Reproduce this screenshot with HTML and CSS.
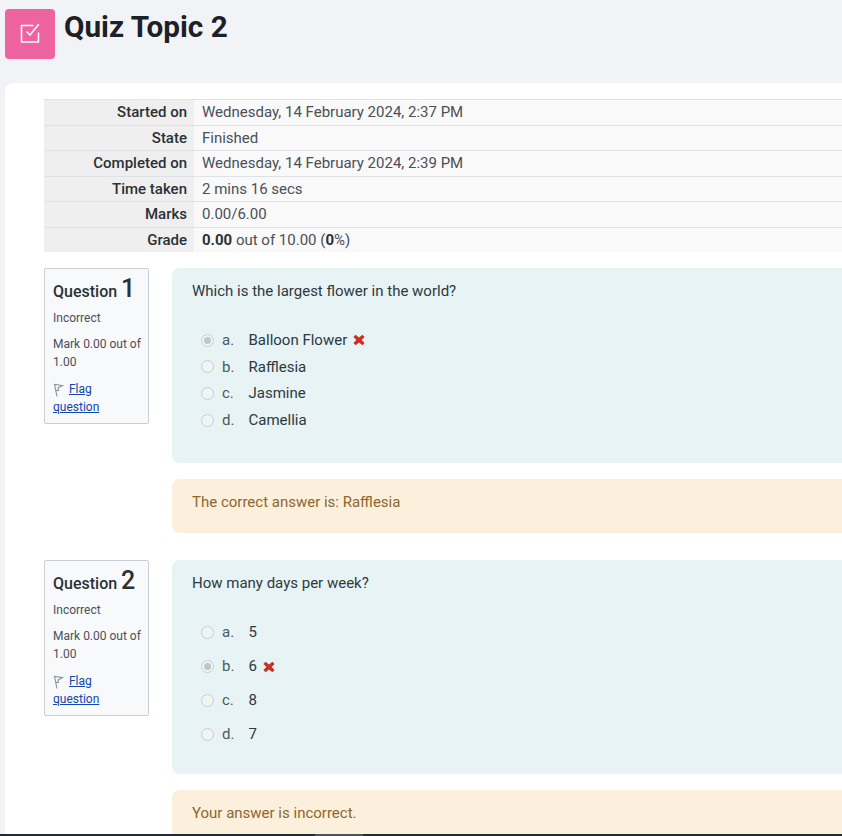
FILE: index.html
```html
<!DOCTYPE html>
<html lang="en">
<head>
<meta charset="utf-8">
<title>Quiz Topic 2</title>
<link rel="stylesheet" href="styles.css">
</head>
<body>
<div class="page">
  <header class="page-header">
    <div class="activity-icon">
      <svg width="24" height="24" viewBox="0 0 24 24" fill="none" stroke="#fff" stroke-width="1.5" stroke-linecap="round" stroke-linejoin="round">
        <path d="M20.5 11V20H3.5V3.5H15"/>
        <path d="M9 10L12 13L20.5 2.5"/>
      </svg>
    </div>
    <h1 class="title">Quiz Topic 2</h1>
  </header>
  <main class="card">
    <table class="summary">
      <tr><th>Started on</th><td>Wednesday, 14 February 2024, 2:37 PM</td></tr>
      <tr><th>State</th><td>Finished</td></tr>
      <tr><th>Completed on</th><td>Wednesday, 14 February 2024, 2:39 PM</td></tr>
      <tr><th>Time taken</th><td>2 mins 16 secs</td></tr>
      <tr><th>Marks</th><td>0.00/6.00</td></tr>
      <tr class="last"><th>Grade</th><td><b>0.00</b> out of 10.00 (<b>0</b>%)</td></tr>
    </table>

    <section class="question q1">
      <aside class="info">
        <h3 class="qno">Question <span class="num">1</span></h3>
        <div class="state">Incorrect</div>
        <div class="grade">Mark 0.00 out of 1.00</div>
        <div class="flag">
          <svg class="flag-icon" width="12" height="14" viewBox="0 0 12 14" fill="none" stroke="#8a8f94" stroke-width="1.1"><path d="M4 13.5L1.5 1.5L9.5 2.5L5 5L5.5 7.5L2.8 7.5"/></svg>
          <a href="#">Flag question</a>
        </div>
      </aside>
      <div class="content">
        <div class="formulation">
          <p class="qtext">Which is the largest flower in the world?</p>
          <div class="answers">
            <div class="answer"><span class="radio checked"></span><span class="letter">a.</span><span>Balloon Flower</span><svg class="cross" width="12" height="12" viewBox="0 0 12 12"><path d="M2.6 0.8L6 3.6L9.4 0.8L11.6 3L8.6 6L11.6 9L9.4 11.2L6 8.4L2.6 11.2L0.4 9L3.4 6L0.4 3Z" fill="#ca3120"/></svg></div>
            <div class="answer"><span class="radio"></span><span class="letter">b.</span><span>Rafflesia</span></div>
            <div class="answer"><span class="radio"></span><span class="letter">c.</span><span>Jasmine</span></div>
            <div class="answer"><span class="radio"></span><span class="letter">d.</span><span>Camellia</span></div>
          </div>
        </div>
        <div class="feedback">The correct answer is: Rafflesia</div>
      </div>
    </section>

    <section class="question q2">
      <aside class="info">
        <h3 class="qno">Question <span class="num">2</span></h3>
        <div class="state">Incorrect</div>
        <div class="grade">Mark 0.00 out of 1.00</div>
        <div class="flag">
          <svg class="flag-icon" width="12" height="14" viewBox="0 0 12 14" fill="none" stroke="#8a8f94" stroke-width="1.1"><path d="M4 13.5L1.5 1.5L9.5 2.5L5 5L5.5 7.5L2.8 7.5"/></svg>
          <a href="#">Flag question</a>
        </div>
      </aside>
      <div class="content">
        <div class="formulation">
          <p class="qtext">How many days per week?</p>
          <div class="answers">
            <div class="answer"><span class="radio"></span><span class="letter">a.</span><span>5</span></div>
            <div class="answer"><span class="radio checked"></span><span class="letter">b.</span><span>6</span><svg class="cross" width="12" height="12" viewBox="0 0 12 12"><path d="M2.6 0.8L6 3.6L9.4 0.8L11.6 3L8.6 6L11.6 9L9.4 11.2L6 8.4L2.6 11.2L0.4 9L3.4 6L0.4 3Z" fill="#ca3120"/></svg></div>
            <div class="answer"><span class="radio"></span><span class="letter">c.</span><span>8</span></div>
            <div class="answer"><span class="radio"></span><span class="letter">d.</span><span>7</span></div>
          </div>
        </div>
        <div class="feedback">Your answer is incorrect.</div>
      </div>
    </section>
  </main>
</div>
<div class="bottom-bar"><span class="bottom-thumb"></span></div>
</body>
</html>
```
FILE: styles.css
```css
html, body {
  margin: 0;
  height: 836px;
  overflow: hidden;
}
body {
  background: #f1f3f7;
  color: #1d2125;
  font-family: Roboto, "Liberation Sans", sans-serif;
  font-size: 15px;
  line-height: 1.5;
  position: relative;
}
.page {
  width: 900px;
  padding-left: 5px;
}
.page-header {
  display: flex;
  align-items: flex-start;
  gap: 9px;
  padding-top: 9px;
  height: 83px;
  box-sizing: border-box;
}
.activity-icon {
  width: 50px;
  height: 50px;
  background: #ee64a0;
  border-radius: 4px;
  display: flex;
  align-items: center;
  justify-content: center;
}
.title {
  margin: 0;
  font-size: 29.7px;
  font-weight: 700;
  line-height: 36px;
}
.card {
  background: #fff;
  border-radius: 8px 0 0 0;
  padding: 16px 0 0 39px;
  height: 800px;
}
.summary {
  width: 100%;
  border-collapse: collapse;
  color: #495057;
  font-size: 15px;
  margin-bottom: 16px;
}
.summary th, .summary td {
  height: 25.5px;
  padding: 0 7px;
  border-top: 1px solid #dee2e6;
  box-sizing: border-box;
  line-height: 24px;
}
.summary .last th, .summary .last td {
  height: 25px;
}
.summary th {
  width: 150px;
  box-sizing: border-box;
  text-align: right;
  background: #efefef;
  color: #2b3136;
  font-weight: 500;
}
.summary td {
  background: #f9f9f9;
  padding-left: 8px;
  text-align: left;
}
.summary b { font-weight: 700; color: #2b3136; }
.question {
  display: flex;
  gap: 23px;
  align-items: flex-start;
}
.q1 { margin-bottom: 27px; }
.info {
  width: 105px;
  height: 156px;
  flex: none;
  box-sizing: border-box;
  padding: 6px 6px 6px 8px;
  background: #f8f9fa;
  border: 1px solid #c8ced5;
  border-radius: 2px;
  font-size: 12px;
  line-height: 18px;
  color: #495057;
}
.qno {
  margin: 0 0 3px;
  font-size: 16px;
  font-weight: 500;
  line-height: 28px;
  color: #2b3136;
}
.num {
  font-size: 25px;
  font-weight: 500;
}
.state { margin-bottom: 8px; }
.grade { margin-bottom: 9px; }
.flag { padding-right: 12px; }
.flag-icon {
  vertical-align: -4px;
  margin-right: 1px;
}
.flag a { color: #0f47ad; text-decoration: underline; }
.content { flex: 1; }
.formulation {
  background: #e7f3f5;
  color: #2c3a3f;
  border-radius: 8px 0 0 8px;
  padding: 12px 20px 0;
  box-sizing: border-box;
}
.q1 .formulation { height: 195px; }
.q2 .formulation { height: 214px; }
.qtext {
  margin: 0;
  height: 22px;
  line-height: 22px;
}
.answers { padding-top: 25px; }
.answer {
  display: flex;
  align-items: center;
  height: 26.6px;
  padding-left: 9px;
}
.q2 .answers { padding-top: 21.5px; }
.q2 .answer { height: 34px; }
.radio {
  width: 13px;
  height: 13px;
  box-sizing: border-box;
  border: 1px solid #c9cdd0;
  border-radius: 50%;
  background: #eff5f7;
  margin-right: 8.5px;
  margin-left: -0.5px;
  position: relative;
}
.radio.checked::after {
  content: "";
  position: absolute;
  inset: 2px;
  border-radius: 50%;
  background: #c2c6c8;
}
.letter {
  width: 26.5px;
  color: #495a60;
}
.cross { margin-left: 6px; }
.feedback {
  margin-top: 16px;
  background: #fcefdc;
  color: #8e662e;
  border-radius: 8px 0 0 8px;
  height: 54px;
  padding: 12px 20px;
  box-sizing: border-box;
  line-height: 22px;
}
.bottom-bar {
  position: absolute;
  left: 0;
  right: 0;
  top: 834px;
  height: 2px;
  background: #1d2b36;
}
.bottom-thumb {
  display: block;
  position: absolute;
  left: 315px;
  width: 48px;
  height: 2px;
  background: #4a5560;
}
```
